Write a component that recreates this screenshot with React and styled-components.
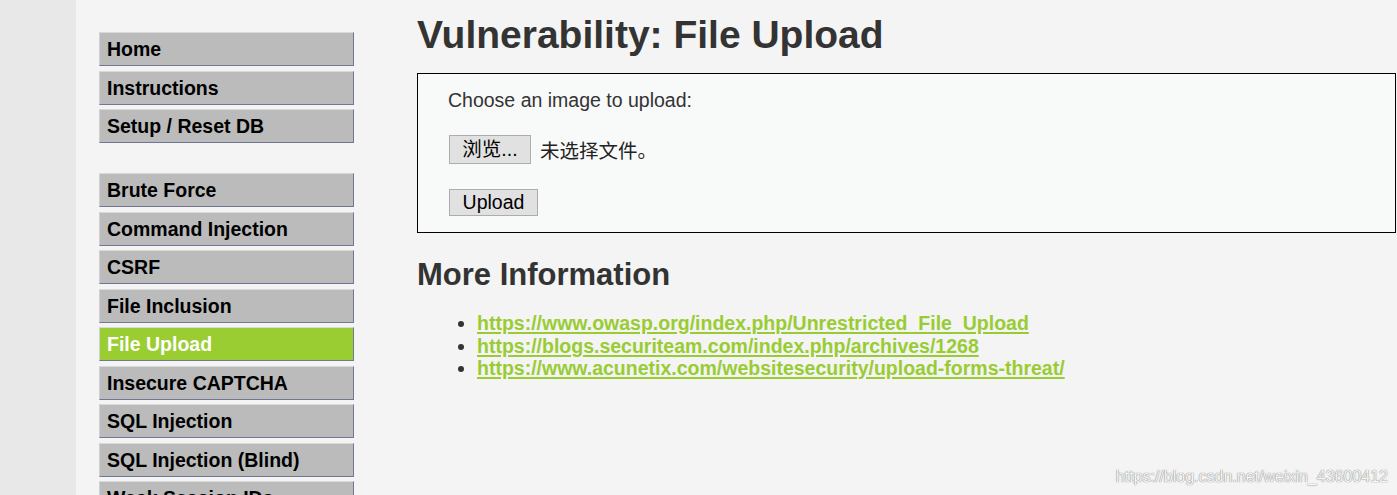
import React from "react";
import styled, { createGlobalStyle } from "styled-components";

const Global = createGlobalStyle`
  html, body {
    margin: 0;
    padding: 0;
    overflow: hidden;
    background: #f4f4f4;
    font-family: "Liberation Sans", Arial, sans-serif;
    color: #333;
  }
`;

const Page = styled.div`
  position: relative;
  display: flex;
  width: 1397px;
  height: 495px;
  overflow: hidden;
  background: #f4f4f4;
`;

const Strip = styled.div`
  flex: 0 0 76px;
  background: #e8e8e8;
`;

const Menu = styled.nav`
  flex: 0 0 255px;
  margin-left: 23px;
  padding-top: 32px;
  display: flex;
  flex-direction: column;
`;

const MenuGroup = styled.ul`
  list-style: none;
  margin: 0 0 30px 0;
  padding: 0;
  display: flex;
  flex-direction: column;
  gap: 4.5px;
`;

const MenuItem = styled.li`
  box-sizing: border-box;
  height: 34px;
  flex: 0 0 34px;
  padding: 5px 0 5px 7px;
  border: 1px solid;
  border-color: #d9d9d9 #6f7794 #6f7794 #d0d0d0;
  background: ${(p) => (p.$active ? "#9acd32" : "#bbbbbb")};
  color: ${(p) => (p.$active ? "#ffffff" : "#000000")};
  font-weight: bold;
  font-size: 19.5px;
  line-height: 22px;
  white-space: nowrap;
`;

const Main = styled.main`
  flex: 1;
  margin-left: 63px;
  padding-top: 13px;
  display: flex;
  flex-direction: column;
  align-items: stretch;
`;

const Title = styled.h1`
  margin: 0 0 16px 0;
  font-size: 39px;
  line-height: 44px;
  font-weight: bold;
  color: #333;
`;

const CodeArea = styled.div`
  box-sizing: border-box;
  width: 979px;
  height: 160px;
  border: 1px solid #000;
  background: #f8f9f9;
  padding: 15px 30px;
  display: flex;
  flex-direction: column;
  align-items: flex-start;
`;

const Prompt = styled.div`
  font-size: 19.5px;
  line-height: 22px;
  color: #333;
  margin-bottom: 24px;
`;

const FileRow = styled.div`
  display: flex;
  align-items: center;
  gap: 9px;
  margin-left: 1px;
  margin-bottom: 25px;
`;

const NativeButton = styled.button`
  box-sizing: border-box;
  width: ${(p) => p.$w}px;
  height: ${(p) => p.$h}px;
  margin: 0;
  padding: 0;
  background: #e1e1e1;
  border: 1px solid #adadad;
  border-radius: 0;
  color: #000;
  font-family: "Liberation Sans", "Noto Sans CJK SC", sans-serif;
  font-size: 19.5px;
  line-height: 1;
  display: flex;
  align-items: center;
  justify-content: center;
`;

const NoFile = styled.span`
  font-family: "Noto Sans CJK SC", sans-serif;
  font-size: 19.5px;
  color: #222;
  line-height: 22px;
`;

const UploadWrap = styled.div`
  margin-left: 1px;
`;

const SubTitle = styled.h2`
  margin: 24px 0 19px 0;
  font-size: 31px;
  line-height: 36px;
  font-weight: bold;
  color: #333;
`;

const Links = styled.ul`
  margin: 0;
  padding-left: 60px;
  list-style: disc;
  font-size: 19.5px;
  line-height: 22.5px;
  color: #333;
`;

const LinkItem = styled.li``;

const Link = styled.a`
  color: #99cc33;
  font-weight: bold;
  text-decoration: underline;
  text-decoration-thickness: 2px;
  text-underline-offset: 2px;
`;

const Watermark = styled.div`
  position: absolute;
  right: 9px;
  bottom: 9px;
  font-family: "Liberation Sans", Arial, sans-serif;
  font-size: 16px;
  color: rgba(255, 255, 255, 0.95);
  text-shadow: 0 0 1px rgba(90, 90, 90, 0.8), 0 0 1px rgba(90, 90, 90, 0.5);
`;

const groups = [
  ["Home", "Instructions", "Setup / Reset DB"],
  [
    "Brute Force",
    "Command Injection",
    "CSRF",
    "File Inclusion",
    "File Upload",
    "Insecure CAPTCHA",
    "SQL Injection",
    "SQL Injection (Blind)",
    "Weak Session IDs",
  ],
];

const links = [
  "https://www.owasp.org/index.php/Unrestricted_File_Upload",
  "https://blogs.securiteam.com/index.php/archives/1268",
  "https://www.acunetix.com/websitesecurity/upload-forms-threat/",
];

export default function App() {
  return (
    <>
      <Global />
      <Page>
        <Strip />
        <Menu>
          {groups.map((g, i) => (
            <MenuGroup key={i}>
              {g.map((name) => (
                <MenuItem key={name} $active={name === "File Upload"}>
                  {name}
                </MenuItem>
              ))}
            </MenuGroup>
          ))}
        </Menu>
        <Main>
          <Title>Vulnerability: File Upload</Title>
          <CodeArea>
            <Prompt>Choose an image to upload:</Prompt>
            <FileRow>
              <NativeButton $w={82} $h={29}>浏览...</NativeButton>
              <NoFile>未选择文件。</NoFile>
            </FileRow>
            <UploadWrap>
              <NativeButton $w={89} $h={27}>Upload</NativeButton>
            </UploadWrap>
          </CodeArea>
          <SubTitle>More Information</SubTitle>
          <Links>
            {links.map((l) => (
              <LinkItem key={l}>
                <Link href={l}>{l}</Link>
              </LinkItem>
            ))}
          </Links>
        </Main>
        <Watermark>https://blog.csdn.net/weixin_43600412</Watermark>
      </Page>
    </>
  );
}
